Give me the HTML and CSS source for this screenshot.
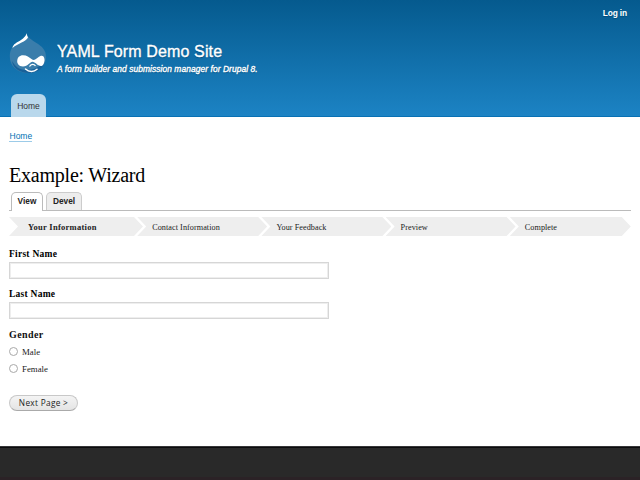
FILE: index.html
```html
<!DOCTYPE html>
<html lang="en">
<head>
<meta charset="utf-8">
<title>Example: Wizard | YAML Form Demo Site</title>
<link rel="stylesheet" href="styles.css">
</head>
<body>
<header class="header">
  <nav class="account"><a href="#">Log in</a></nav>
  <div class="branding">
    <svg class="logo" viewBox="0 0 38 42" width="38" height="42" aria-hidden="true">
      <path d="M17.500 1C18 5 22 7.500 27.500 11C33 14.500 37 18 37 25C37 35 29 41 19 41C8 41 .8 34 .8 24.500C.8 17 4 13.500 9 10.500C14 7.500 17 5 17.500 1Z" fill="#3a7dab"/>
      <path d="M3 29C4 37 12 41 20 41C29 41 35 36 36.500 28C31 35 25 38 17 38C10 38 6 34 3 29Z" fill="#17619a"/>
      <path d="M17.600 1.300C18 4 19 5 19 5.500C17 10 9 11 3.500 16C4 12 8 10.500 12 8C15 6 17 4 17.600 1.300Z" fill="#fff"/>
      <path d="M14 23.300C18 23.300 20 25.500 22.500 27C25 29 26 27.500 29 25.500C31 24 33 23.200 34.500 24.500C36.500 27.500 35.500 33 32.500 34C29 34.500 26 29.700 23.500 29.800C21 29.800 19 34.500 14 34.500C9.500 34.500 8 31 8.200 29C8.500 25.500 10.500 23.300 14 23.300Z" fill="#fff"/>
      <path d="M20.500 34.500C22 31.700 25 31.800 26.500 34" fill="none" stroke="#fff" stroke-width="1.300"/>
      <path d="M16.500 37C20 40.300 25 40 28 37.300" fill="none" stroke="#fff" stroke-width="1.500" stroke-linecap="round"/>
    </svg>
    <div class="titles">
      <div class="site-name">YAML Form Demo Site</div>
      <div class="slogan">A form builder and submission manager for Drupal 8.</div>
    </div>
  </div>
  <nav class="main-menu"><a href="#">Home</a></nav>
</header>
<main class="content">
  <nav class="breadcrumb"><a href="#">Home</a></nav>
  <h1>Example: Wizard</h1>
  <nav class="tabs"><a class="tab active" href="#">View</a><a class="tab" href="#">Devel</a></nav>
  <ol class="progress">
    <li class="step current">Your Information</li>
    <li class="step">Contact Information</li>
    <li class="step">Your Feedback</li>
    <li class="step">Preview</li>
    <li class="step last">Complete</li>
  </ol>
  <form>
    <div class="field"><label for="first">First Name</label><input id="first" type="text"></div>
    <div class="field"><label for="last">Last Name</label><input id="last" type="text"></div>
    <fieldset>
      <legend>Gender</legend>
      <label class="option"><input type="radio" name="gender"><span>Male</span></label>
      <label class="option"><input type="radio" name="gender"><span>Female</span></label>
    </fieldset>
    <button type="button">Next Page &gt;</button>
  </form>
</main>
<footer class="footer"></footer>
</body>
</html>
```
FILE: styles.css
```css
* { box-sizing: border-box; }
body {
  margin: 0;
  height: 480px;
  overflow: hidden;
  display: flex;
  flex-direction: column;
  background: #fff;
  color: #222;
  font: 8.8px/12px "Liberation Serif", serif;
  white-space: nowrap;
}
a { color: inherit; text-decoration: none; }

.header {
  height: 117px;
  flex: none;
  display: flex;
  flex-direction: column;
  padding: 0 10px;
  background: linear-gradient(#055a8e, #1c83c4 116px, #0871b4 116px);
  color: #fff;
  font-family: "Liberation Sans", sans-serif;
}
.account {
  height: 32px;
  padding: 7px 3px 0 0;
  text-align: right;
  font-size: 8.4px;
  letter-spacing: -0.15px;
  font-weight: bold;
  text-shadow: 0 1px 1px #004a7a;
}
.branding { display: flex; height: 62px; }
.logo { display: block; width: 38px; height: 42px; margin-left: -1px; }
.titles { padding: 9px 0 0 10px; }
.site-name {
  font-size: 16px;
  line-height: 21px;
  letter-spacing: 0.13px;
  text-shadow: 0 1px 1px #004a7a;
  -webkit-text-stroke: 0.35px #fff;
}
.slogan {
  margin-top: 1px;
  font-size: 8.4px;
  line-height: 12px;
  letter-spacing: 0.09px;
  font-style: italic;
  -webkit-text-stroke: 0.35px #fff;
  text-shadow: 0 1px 1px #004a7a;
}
.main-menu { display: flex; padding-left: 1px; }
.main-menu a {
  width: 35px;
  height: 23px;
  border-radius: 6px 6px 0 0;
  background: #b9d8ec;
  color: #333;
  font-size: 8.5px;
  line-height: 24px;
  text-align: center;
}

.content { height: 329px; flex: none; padding: 14px 9px 0; }
.breadcrumb {
  height: 34px;
  font: 8.5px/10px "Liberation Sans", sans-serif;
  color: #0071b3;
}
.breadcrumb a { display: inline-block; padding-left: 0.5px; border-bottom: 1px solid #9ccbe8; }
h1 {
  margin: 0;
  height: 27px;
  color: #000;
  font-size: 20px;
  line-height: 20px;
  letter-spacing: -0.22px;
  font-weight: normal;
}
.tabs {
  display: flex;
  gap: 3px;
  height: 19px;
  padding-left: 2px;
  border-bottom: 1px solid #bbb;
  font: bold 8.3px/16px "Liberation Sans", sans-serif;
}
.tab {
  width: 36px;
  height: 18px;
  border: 1px solid #ccc;
  border-bottom: 0;
  border-radius: 5px 5px 0 0;
  background: #ededed;
  text-align: center;
}
.tab.active { width: 32px; height: 19px; background: #fff; border-color: #bbb; }
.progress {
  display: flex;
  width: 622px;
  height: 19px;
  margin: 6px 0 0;
  padding: 0;
  list-style: none;
}
.step {
  flex: none;
  width: 130px;
  margin-right: -5.8px;
  padding-left: 15px;
  background: #eee;
  clip-path: polygon(0 0, calc(100% - 9px) 0, 100% 50%, calc(100% - 9px) 100%, 0 100%, 9px 50%);
  font-size: 8.2px;
  line-height: 21px;
  letter-spacing: 0.05px;
}
.step.current { width: 134px; padding-left: 19px; font-size: 8.5px; font-weight: bold; letter-spacing: 0.28px; }
.step.last { width: 121px; margin-right: 0; }

form { padding-top: 12px; }
.field { height: 40px; color: #000; }
.field label { display: block; height: 14px; font-size: 9.5px; line-height: 13px; font-weight: bold; letter-spacing: 0.25px; }
.field input {
  display: block;
  width: 320px;
  height: 17px;
  padding: 0 3px;
  border: 1px solid #d6d6d6;
  box-shadow: inset 0 0 0 1px #eee;
  background: #fff;
}
fieldset { margin: 0; padding: 0; border: 0; }
legend { height: 15px; padding: 0; font-size: 10px; line-height: 14px; font-weight: bold; letter-spacing: 0.4px; color: #111; }
.option { display: flex; align-items: center; gap: 4px; height: 17px; }
.option input {
  appearance: none;
  width: 9px;
  height: 9px;
  margin: 0;
  border: 1px solid #a9a9a9;
  border-radius: 50%;
  background: #fff;
}
button {
  display: block;
  width: 69px;
  height: 16px;
  margin-top: 18px;
  padding: 0;
  border: 1px solid #c8c8c8;
  border-bottom-color: #aaa;
  border-radius: 8px;
  background: linear-gradient(#f4f4f4, #e4e4e4);
  color: #222;
  font: 8.3px/14px "Open Sans", sans-serif;
  letter-spacing: 0.3px;
  text-align: center;
}
.footer {
  flex: 1;
  border-top: 1px solid #363638;
  border-bottom: 3px solid #2b2226;
  background: #292929;
  box-shadow: inset 0 1px #0b0b0d;
}
```
